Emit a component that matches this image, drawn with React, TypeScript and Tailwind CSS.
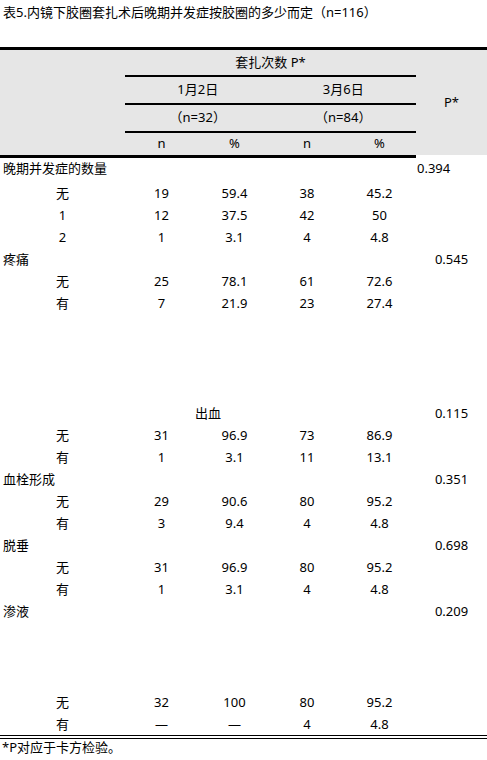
const cols = "grid grid-cols-[125px_73px_73px_72px_73px_71px]";

type Sub = { label: string; v: string[] };
type Group = { title: string; p: string; subs: Sub[]; kind?: "first" | "center" | "gap" };

const groups: Group[] = [
  {
    title: "晚期并发症的数量",
    p: "0.394",
    kind: "first",
    subs: [
      { label: "无", v: ["19", "59.4", "38", "45.2"] },
      { label: "1", v: ["12", "37.5", "42", "50"] },
      { label: "2", v: ["1", "3.1", "4", "4.8"] },
    ],
  },
  {
    title: "疼痛",
    p: "0.545",
    subs: [
      { label: "无", v: ["25", "78.1", "61", "72.6"] },
      { label: "有", v: ["7", "21.9", "23", "27.4"] },
    ],
  },
  {
    title: "出血",
    p: "0.115",
    kind: "center",
    subs: [
      { label: "无", v: ["31", "96.9", "73", "86.9"] },
      { label: "有", v: ["1", "3.1", "11", "13.1"] },
    ],
  },
  {
    title: "血栓形成",
    p: "0.351",
    subs: [
      { label: "无", v: ["29", "90.6", "80", "95.2"] },
      { label: "有", v: ["3", "9.4", "4", "4.8"] },
    ],
  },
  {
    title: "脱垂",
    p: "0.698",
    subs: [
      { label: "无", v: ["31", "96.9", "80", "95.2"] },
      { label: "有", v: ["1", "3.1", "4", "4.8"] },
    ],
  },
  {
    title: "渗液",
    p: "0.209",
    kind: "gap",
    subs: [
      { label: "无", v: ["32", "100", "80", "95.2"] },
      { label: "有", v: ["—", "—", "4", "4.8"] },
    ],
  },
];

function SubRow({ s, tall }: { s: Sub; tall?: boolean }) {
  return (
    <div className={`${cols} ${tall ? "h-[91px] items-end" : "h-[22px] items-center"} leading-[22px]`}>
      <div className="text-center">{s.label}</div>
      {s.v.map((x, i) => (
        <div key={i} className="text-center">
          {x}
        </div>
      ))}
      <div />
    </div>
  );
}

function GroupRows({ g }: { g: Group }) {
  let head;
  if (g.kind === "first") {
    head = (
      <div className={`${cols} h-[24px] items-start leading-[21px]`}>
        <div className="col-span-5 pl-[3px]">{g.title}</div>
        <div className="text-left pl-[1px]">{g.p}</div>
      </div>
    );
  } else if (g.kind === "center") {
    head = (
      <div className={`${cols} h-[110px] items-end leading-[22px]`}>
        <div className="col-span-5 text-center">{g.title}</div>
        <div className="text-center">{g.p}</div>
      </div>
    );
  } else {
    head = (
      <div className={`${cols} h-[22px] items-center leading-[22px]`}>
        <div className="col-span-5 pl-[3px]">{g.title}</div>
        <div className="text-center">{g.p}</div>
      </div>
    );
  }
  return (
    <>
      {head}
      {g.subs.map((s, i) => (
        <SubRow key={i} s={s} tall={g.kind === "gap" && i === 0} />
      ))}
    </>
  );
}

export default function App() {
  return (
    <div className="w-[487px] h-[760px] bg-white text-black text-[13px] font-['Noto_Sans','Noto_Sans_CJK_SC',sans-serif] overflow-hidden">
      <div className="h-[25px] leading-[25px] pl-[3px]">表5.内镜下胶圈套扎术后晚期并发症按胶圈的多少而定（n=116）</div>

      <div className="mt-[22px] border-t-[3px] border-black flex items-start">
        <div className="w-[416px] flex bg-[#e6e6e6] border-b-[3px] border-black">
          <div className="w-[125px]" />
          <div className="w-[291px] flex flex-col">
            <div className="h-[27px] border-b-2 border-black flex items-center justify-center">套扎次数 P*</div>
            <div className="h-[28px] border-b-2 border-black grid grid-cols-2 items-center text-center">
              <div>1月2日</div>
              <div>3月6日</div>
            </div>
            <div className="h-[28px] border-b-2 border-black grid grid-cols-2 items-center text-center">
              <div>（n=32）</div>
              <div>（n=84）</div>
            </div>
            <div className="h-[22px] grid grid-cols-[73px_73px_72px_73px] items-center text-center">
              <div>n</div>
              <div>%</div>
              <div>n</div>
              <div>%</div>
            </div>
          </div>
        </div>
        <div className="flex-1 h-[105px] bg-[#e6e6e6] flex items-center justify-center">P*</div>
      </div>

      <div className="flex flex-col">
        {groups.map((g, i) => (
          <GroupRows key={i} g={g} />
        ))}
      </div>

      <div className="h-[4px] border-y border-black" />
      <div className="h-[16px] leading-[16px] pl-[2px]">*P对应于卡方检验。</div>
    </div>
  );
}
